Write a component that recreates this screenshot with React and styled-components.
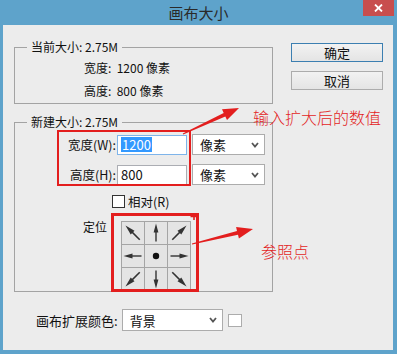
import React from 'react';
import styled, { createGlobalStyle } from 'styled-components';

const GlobalStyle = createGlobalStyle`
  html, body {
    margin: 0;
    padding: 0;
    background: #ffffff;
  }
`;

const FONT = `"Noto Sans CJK SC", "Microsoft YaHei", "Liberation Sans", sans-serif`;
const RED = '#e31e1e';

const Window = styled.div`
  position: relative;
  width: 397px;
  height: 354px;
  background: #5ea3cb;
  display: flex;
  flex-direction: column;
  font-family: ${FONT};
  font-size: 12px;
  color: #111;
  overflow: hidden;
`;

const TitleBar = styled.div`
  position: relative;
  height: 25px;
  display: flex;
  align-items: center;
  justify-content: center;
  font-size: 15px;
  color: #2a2a2a;
`;

const CloseButton = styled.div`
  position: absolute;
  top: 0;
  right: 3px;
  width: 31px;
  height: 16px;
  background: #c84e4e;
  display: flex;
  align-items: center;
  justify-content: center;
`;

const Body = styled.div`
  flex: 1;
  margin: 0 4px 4px 3px;
  background: #ececec;
  padding: 0 0 0 11px;
  display: flex;
  flex-direction: column;
`;

const MainRow = styled.div`
  display: flex;
  gap: 18px;
  margin-top: 18px;
`;

const LeftCol = styled.div`
  width: 259px;
  display: flex;
  flex-direction: column;
  gap: 18px;
  padding-top: 4px;
`;

const RightCol = styled.div`
  width: 92px;
  display: flex;
  flex-direction: column;
  gap: 9px;
`;

const Button = styled.div`
  height: 19px;
  box-sizing: border-box;
  border: 1px solid ${(p) => (p.$primary ? '#3c7fb1' : '#acacac')};
  background: linear-gradient(#f2f2f2, #e4e4e4);
  display: flex;
  align-items: center;
  justify-content: center;
  font-size: 13px;
`;

const Group = styled.div`
  position: relative;
  box-sizing: border-box;
  border: 1px solid #a3a3a3;
  height: ${(p) => p.$height}px;
  padding: ${(p) => p.$pad};
`;

const Legend = styled.div`
  position: absolute;
  top: -9px;
  left: 12px;
  padding: 0 4px;
  background: #ececec;
  line-height: 16px;
`;

const InfoRow = styled.div`
  height: 23px;
  line-height: 23px;
`;

const SizeForm = styled.div`
  display: grid;
  grid-template-columns: 60px 75px 73px;
  grid-auto-rows: 21px;
  row-gap: 9px;
  padding-left: 42px;
  align-items: center;
`;

const FieldLabel = styled.div`
  text-align: right;
  padding-right: 1px;
  font-size: 12.5px;
`;

const TextInput = styled.div`
  width: 70px;
  height: 20px;
  box-sizing: border-box;
  border: 1px solid ${(p) => (p.$focused ? '#7eb4ea' : '#abadb3')};
  background: #fff;
  display: flex;
  align-items: center;
  padding-left: 3px;
  font-size: 13px;
`;

const Selected = styled.span`
  background: #3399ff;
  color: #fff;
  line-height: 15px;
  padding: 0 1px;
`;

const Dropdown = styled.div`
  width: ${(p) => p.$width || 73}px;
  height: ${(p) => p.$h || 21}px;
  box-sizing: border-box;
  border: 1px solid #acacac;
  background: #fff;
  display: flex;
  align-items: center;
  justify-content: space-between;
  padding: 0 5px 0 7px;
  font-size: 13px;
`;

const CheckRow = styled.div`
  display: flex;
  align-items: center;
  gap: 3px;
  margin-top: 7px;
  padding-left: 97px;
  font-size: 12.5px;
`;

const CheckBox = styled.div`
  width: 13px;
  height: 13px;
  box-sizing: border-box;
  border: 1px solid #333;
  background: #fff;
`;

const AnchorRow = styled.div`
  display: flex;
  align-items: flex-start;
  gap: 14px;
  margin-top: 10px;
  padding-left: 68px;
`;

const AnchorLabel = styled.div`
  line-height: 14px;
  margin-top: -1px;
`;

const AnchorGrid = styled.div`
  display: grid;
  grid-template-columns: repeat(3, 22px);
  grid-auto-rows: 22px;
  gap: 1px;
  padding: 1px;
  background: #a5a5a5;
`;

const Cell = styled.div`
  background: #e4e4e4;
  display: flex;
  align-items: center;
  justify-content: center;
`;

const BottomRow = styled.div`
  display: flex;
  align-items: center;
  margin-top: 17px;
  padding-left: 22px;
  font-size: 13px;
`;

const BottomLabel = styled.div`
  margin-right: 4px;
`;

const Swatch = styled.div`
  width: 14px;
  height: 13px;
  box-sizing: border-box;
  border: 1px solid #acacac;
  background: #fff;
  margin-left: 5px;
`;

const Overlay = styled.svg`
  position: absolute;
  left: 0;
  top: 0;
  pointer-events: none;
`;

const InputsHighlight = styled.div`
  position: absolute;
  left: 57px;
  top: 130px;
  width: 134px;
  height: 56px;
  box-sizing: border-box;
  border: 2px solid ${RED};
`;

const AnchorHighlight = styled.div`
  position: absolute;
  left: 111px;
  top: 213px;
  width: 88px;
  height: 79px;
  box-sizing: border-box;
  border: 3px solid ${RED};
`;

const Note = styled.div`
  position: absolute;
  left: ${(p) => p.$x}px;
  top: ${(p) => p.$y}px;
  color: ${RED};
  font-size: 16px;
  font-weight: 300;
  line-height: 18px;
  white-space: nowrap;
`;

const Chevron = () => (
  <svg width="8" height="6" viewBox="0 0 8 6">
    <path d="M1 1 L4 4.5 L7 1" fill="none" stroke="#555" strokeWidth="1.8" />
  </svg>
);

// one arrow drawn pointing up, turned to each of the eight directions
const CellArrow = ({ angle }) => {
  const s = angle % 90 === 0 ? 1 : 1.12;
  return (
    <svg width="22" height="22" viewBox="0 0 22 22">
      <g transform={`rotate(${angle} 11 11) translate(11 11) scale(${s}) translate(-11 -11)`}>
        <line x1="11" y1="19.5" x2="11" y2="8" stroke="#333" strokeWidth="1.4" />
        <polygon points="11,1.5 8.6,10.5 13.4,10.5" fill="#333" />
      </g>
    </svg>
  );
};

const Dot = () => (
  <svg width="22" height="22" viewBox="0 0 22 22">
    <circle cx="11" cy="11" r="3.2" fill="#111" />
  </svg>
);

const anchors = [-45, 0, 45, -90, null, 90, -135, 180, 135];

export default function App() {
  return (
    <>
      <GlobalStyle />
      <Window>
        <TitleBar>
          画布大小
          <CloseButton>
            <svg width="9" height="8" viewBox="0 0 9 8">
              <path d="M1 0.5 L8 7.5 M8 0.5 L1 7.5" stroke="#fff" strokeWidth="1.8" />
            </svg>
          </CloseButton>
        </TitleBar>
        <Body>
          <MainRow>
            <LeftCol>
              <Group $height={57} $pad="8px 0 0 69px">
                <Legend>当前大小: 2.75M</Legend>
                <InfoRow>宽度:&nbsp; 1200 像素</InfoRow>
                <InfoRow>高度:&nbsp; 800 像素</InfoRow>
              </Group>
              <Group $height={170} $pad="11px 0 0 0">
                <Legend>新建大小: 2.75M</Legend>
                <SizeForm>
                  <FieldLabel>宽度(W):</FieldLabel>
                  <TextInput $focused>
                    <Selected>1200</Selected>
                  </TextInput>
                  <Dropdown>
                    像素
                    <Chevron />
                  </Dropdown>
                  <FieldLabel>高度(H):</FieldLabel>
                  <TextInput>800</TextInput>
                  <Dropdown>
                    像素
                    <Chevron />
                  </Dropdown>
                </SizeForm>
                <CheckRow>
                  <CheckBox />
                  相对(R)
                </CheckRow>
                <AnchorRow>
                  <AnchorLabel>定位</AnchorLabel>
                  <AnchorGrid>
                    {anchors.map((a, i) => (
                      <Cell key={i}>{a === null ? <Dot /> : <CellArrow angle={a} />}</Cell>
                    ))}
                  </AnchorGrid>
                </AnchorRow>
              </Group>
            </LeftCol>
            <RightCol>
              <Button $primary>确定</Button>
              <Button>取消</Button>
            </RightCol>
          </MainRow>
          <BottomRow>
            <BottomLabel>画布扩展颜色:</BottomLabel>
            <Dropdown $width={101} $h={22}>
              背景
              <Chevron />
            </Dropdown>
            <Swatch />
          </BottomRow>
        </Body>

        <InputsHighlight />
        <AnchorHighlight />
        <Note $x={253} $y={108}>输入扩大后的数值</Note>
        <Note $x={261} $y={242}>参照点</Note>
        <Overlay width="397" height="354" viewBox="0 0 397 354">
          <polygon
            points="182.8,133.5 223.7,112.9 222,109.3 239,108 227,120.1 225.3,116.5 183.2,134.5"
            fill={RED}
          />
          <polygon
            points="191.9,243.5 237,230.9 236.1,227 253,229 238.9,238.6 238,234.7 192.1,244.5"
            fill={RED}
          />
          <path d="M190.5 216.5 H197.5 M194 213 V220" stroke={RED} strokeWidth="1.6" />
        </Overlay>
      </Window>
    </>
  );
}
